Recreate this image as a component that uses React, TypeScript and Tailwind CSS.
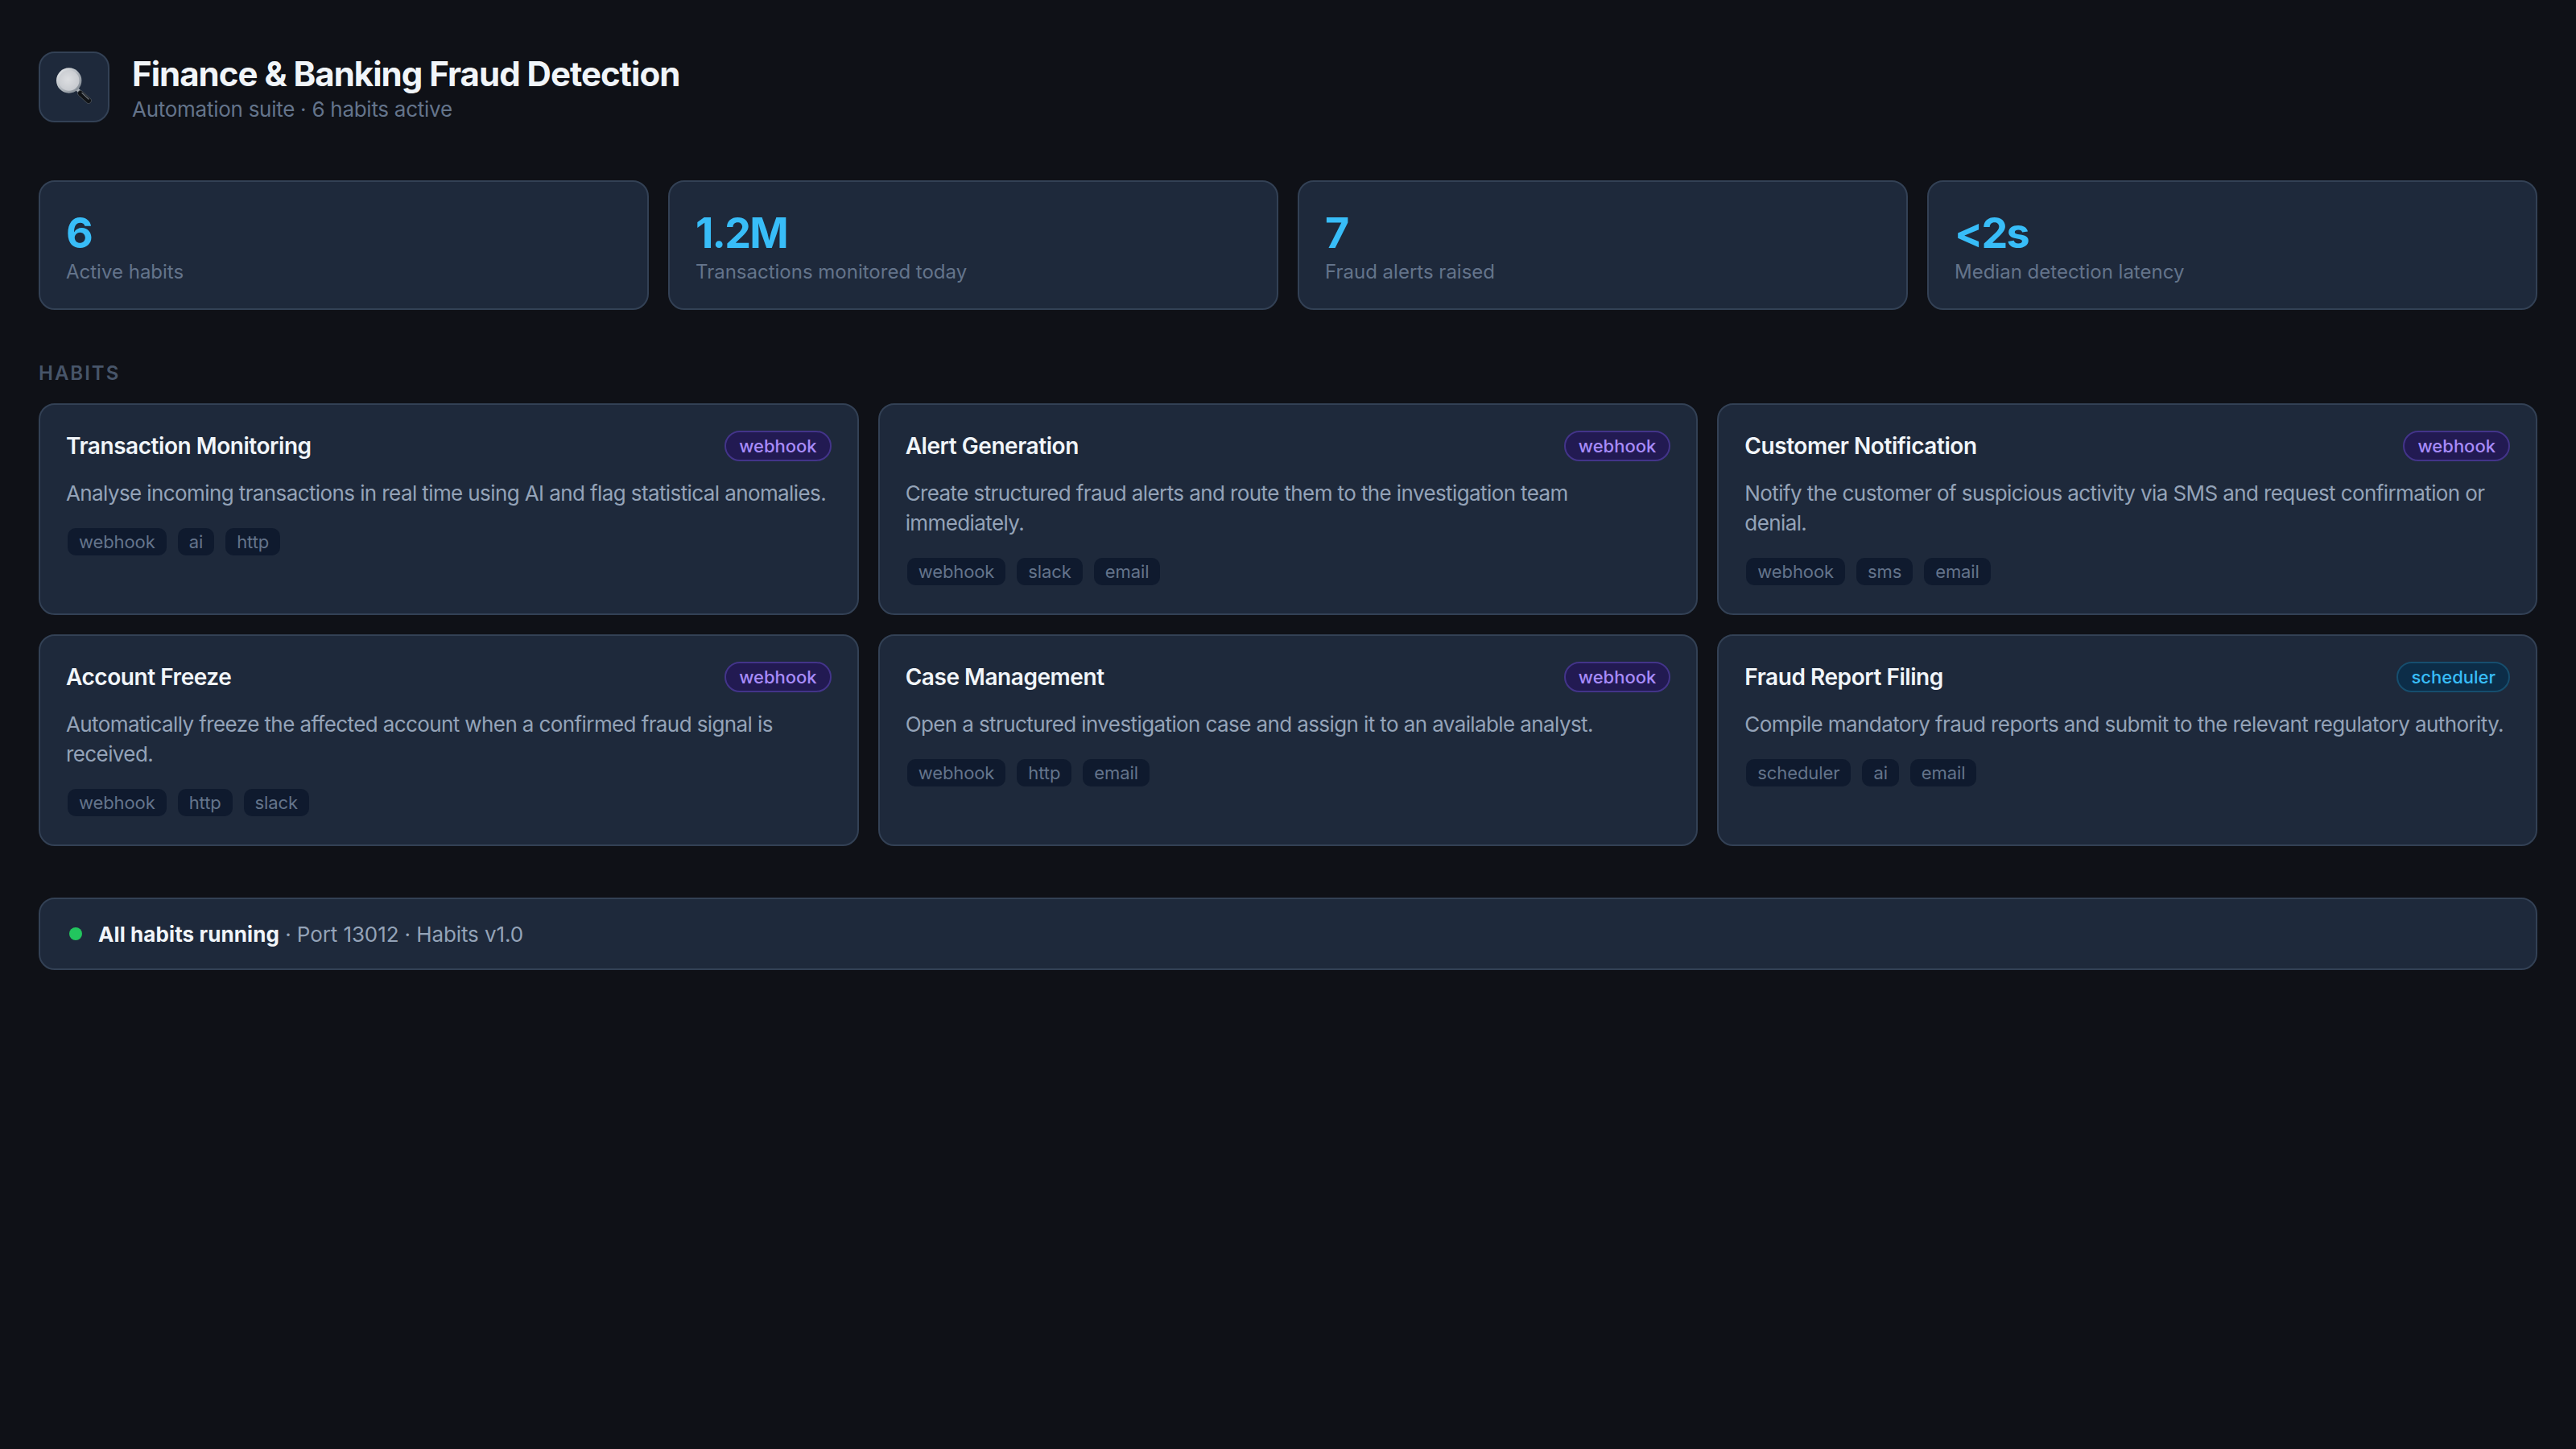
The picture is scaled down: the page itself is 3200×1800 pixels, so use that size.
import React from "react";

const stats = [
  { value: "6", label: "Active habits" },
  { value: "1.2M", label: "Transactions monitored today" },
  { value: "7", label: "Fraud alerts raised" },
  { value: "<2s", label: "Median detection latency" },
];

const habits = [
  { title: "Transaction Monitoring", badge: "webhook", desc: "Analyse incoming transactions in real time using AI and flag statistical anomalies.", tags: ["webhook", "ai", "http"] },
  { title: "Alert Generation", badge: "webhook", desc: "Create structured fraud alerts and route them to the investigation team immediately.", tags: ["webhook", "slack", "email"] },
  { title: "Customer Notification", badge: "webhook", desc: "Notify the customer of suspicious activity via SMS and request confirmation or denial.", tags: ["webhook", "sms", "email"] },
  { title: "Account Freeze", badge: "webhook", desc: "Automatically freeze the affected account when a confirmed fraud signal is received.", tags: ["webhook", "http", "slack"] },
  { title: "Case Management", badge: "webhook", desc: "Open a structured investigation case and assign it to an available analyst.", tags: ["webhook", "http", "email"] },
  { title: "Fraud Report Filing", badge: "scheduler", desc: "Compile mandatory fraud reports and submit to the relevant regulatory authority.", tags: ["scheduler", "ai", "email"] },
];

function Magnifier() {
  return (
    <svg width="46" height="46" viewBox="0 0 46 46" aria-hidden="true" className="mb-[4px]">
      <defs>
        <linearGradient id="rim" x1="0" y1="0" x2="1" y2="1">
          <stop offset="0" stopColor="#eef0f2" />
          <stop offset="1" stopColor="#767f89" />
        </linearGradient>
        <radialGradient id="lens" cx="0.45" cy="0.45" r="0.6">
          <stop offset="0" stopColor="#dcdee1" />
          <stop offset="1" stopColor="#c6c9ce" />
        </radialGradient>
      </defs>
      <path d="M27 28 L30 31" stroke="#aab0b6" strokeWidth="4" fill="none" />
      <path d="M31 33 L41 42" stroke="#4a5158" strokeWidth="7.500" fill="none" strokeLinecap="round" />
      <path d="M31 33 L41 42" stroke="#101316" strokeWidth="6" fill="none" strokeLinecap="round" />
      <path d="M33 32.500 L41 40" stroke="#6b7178" strokeWidth="1.400" fill="none" strokeLinecap="round" />
      <circle cx="16.700" cy="17" r="15.700" fill="url(#rim)" />
      <circle cx="16.700" cy="17" r="12.800" fill="url(#lens)" />
    </svg>
  );
}

function Tag({ children }: { children: React.ReactNode }) {
  return (
    <span className="rounded-[10px] bg-[#0f1a2e] px-[14px] py-[4px] text-[22px] leading-[26px] tracking-[-0.1px] text-[#64748b]">
      {children}
    </span>
  );
}

export default function App() {
  return (
    <div className="min-h-[1800px] bg-[#0f1117] px-[48px] pt-[64px] font-['Inter',sans-serif] text-[#f1f5f9]">
      <header className="flex items-center gap-[28px]">
        <div className="flex h-[88px] w-[88px] items-center justify-center rounded-[20px] border-2 border-[#334155] bg-[#1e293b]">
          <Magnifier />
        </div>
        <div className="pt-[4px]">
          <h1 className="text-[42px] font-bold leading-[48px] tracking-[-1px] text-[#f1f5f9]">Finance &amp; Banking Fraud Detection</h1>
          <p className="mt-[4px] text-[26px] leading-[32px] tracking-[-0.27px] text-[#64748b]">Automation suite · 6 habits active</p>
        </div>
      </header>

      <section className="mt-[72px] grid grid-cols-4 gap-[24px]">
        {stats.map((s) => (
          <div key={s.label} className="h-[161px] rounded-[20px] border-2 border-[#334155] bg-[#1e293b] px-[32px] pt-[34px]">
            <div className="text-[52px] font-bold leading-[60px] tracking-[-1.8px] text-[#38bdf8]">{s.value}</div>
            <div className="mt-[3px] text-[24px] leading-[30px] text-[#64748b]">{s.label}</div>
          </div>
        ))}
      </section>

      <h2 className="mt-[64px] text-[24px] font-semibold leading-[30px] tracking-[2px] text-[#475569]">HABITS</h2>

      <section className="mt-[22px] grid grid-cols-3 gap-[24px]">
        {habits.map((h) => (
          <article key={h.title} className="flex h-[263px] flex-col rounded-[20px] border-2 border-[#334155] bg-[#1e293b] px-[32px] pt-[32px]">
            <div className="flex items-center justify-between">
              <h3 className="text-[28px] font-semibold leading-[36px] tracking-[-0.45px] text-[#f1f5f9]">{h.title}</h3>
              {h.badge === "webhook" ? (
                <span className="rounded-full border-2 border-[#43348a] bg-[#221a52] px-[16px] text-[22px] font-medium leading-[34px] text-[#a78bfa]">{h.badge}</span>
              ) : (
                <span className="rounded-full border-2 border-[#164e6e] bg-[#0c2d48] px-[16px] text-[22px] font-medium leading-[34px] text-[#38bdf8]">{h.badge}</span>
              )}
            </div>
            <p className="mt-[21px] text-[26px] leading-[37px] tracking-[-0.6px] text-[#94a3b8]">{h.desc}</p>
            <div className="mt-[25px] flex gap-[14px] pl-[2px]">
              {h.tags.map((t) => (
                <Tag key={t}>{t}</Tag>
              ))}
            </div>
          </article>
        ))}
      </section>

      <footer className="mt-[64px] flex h-[90px] items-center gap-[20px] rounded-[20px] border-2 border-[#334155] bg-[#1e293b] px-[36px] text-[26px] text-[#94a3b8]">
        <span className="h-[16px] w-[16px] rounded-full bg-[#22c55e]" />
        <span className="tracking-[-0.1px]">
          <strong className="font-bold tracking-[0.1px] text-[#f1f5f9]">All habits running</strong> · Port 13012 · Habits v1.0
        </span>
      </footer>
    </div>
  );
}
